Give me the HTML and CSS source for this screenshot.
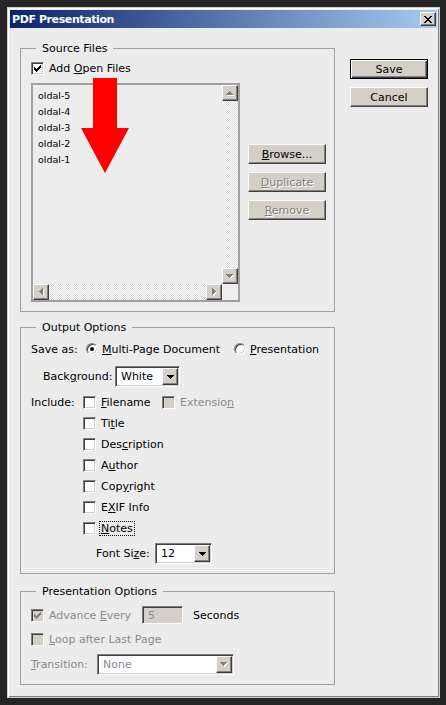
FILE: index.html
```html
<!DOCTYPE html>
<html lang="en">
<head>
<meta charset="utf-8">
<title>PDF Presentation</title>
<link rel="stylesheet" href="styles.css">
</head>
<body>
<div class="window">
  <div class="titlebar">
    <span class="title">PDF Presentation</span>
    <span class="close" aria-label="Close">
      <svg width="8" height="7" viewBox="0 0 8 7" shape-rendering="crispEdges"><path fill="#000" d="M0 0h2v1h-2zM6 0h2v1h-2zM1 1h2v1h-2zM5 1h2v1h-2zM2 2h4v1h-4zM3 3h2v1h-2zM2 4h4v1h-4zM1 5h2v1h-2zM5 5h2v1h-2zM0 6h2v1h-2zM6 6h2v1h-2z"/></svg>
    </span>
  </div>

  <div class="client">
    <div class="main">
      <!-- Source files -->
      <fieldset class="group source">
        <legend>Source Files</legend>
        <div class="row add-open">
          <span class="cb"><svg class="tick" width="7" height="7" viewBox="0 0 7 7" shape-rendering="crispEdges"><path d="M6 0h1v1h-1zM5 1h2v1h-2zM0 2h1v1h-1zM4 2h3v1h-3zM0 3h2v1h-2zM3 3h3v1h-3zM0 4h5v1h-5zM1 5h3v1h-3zM2 6h1v1h-1z"/></svg></span>
          <span>Add <u>O</u>pen Files</span>
        </div>
        <div class="source-body">
          <div class="listbox">
            <ul class="items">
              <li>oldal-5</li>
              <li>oldal-4</li>
              <li>oldal-3</li>
              <li>oldal-2</li>
              <li>oldal-1</li>
            </ul>
            <div class="vscroll">
              <span class="sbtn"><svg width="8" height="5" viewBox="0 0 8 5" shape-rendering="crispEdges"><path fill="#fff" transform="translate(1 1)" d="M3 0h1v1h-1zM2 1h3v1h-3zM1 2h5v1h-5zM0 3h7v1h-7z"/><path fill="#808080" d="M3 0h1v1h-1zM2 1h3v1h-3zM1 2h5v1h-5zM0 3h7v1h-7z"/></svg></span>
              <span class="track"></span>
              <span class="sbtn"><svg width="8" height="5" viewBox="0 0 8 5" shape-rendering="crispEdges"><path fill="#fff" transform="translate(1 1)" d="M0 0h7v1h-7zM1 1h5v1h-5zM2 2h3v1h-3zM3 3h1v1h-1z"/><path fill="#808080" d="M0 0h7v1h-7zM1 1h5v1h-5zM2 2h3v1h-3zM3 3h1v1h-1z"/></svg></span>
            </div>
            <div class="hscroll">
              <span class="sbtn"><svg width="5" height="8" viewBox="0 0 5 8" shape-rendering="crispEdges"><path fill="#fff" transform="translate(1 1)" d="M3 0h1v7h-1zM2 1h1v5h-1zM1 2h1v3h-1zM0 3h1v1h-1z"/><path fill="#808080" d="M3 0h1v7h-1zM2 1h1v5h-1zM1 2h1v3h-1zM0 3h1v1h-1z"/></svg></span>
              <span class="track"></span>
              <span class="sbtn"><svg width="5" height="8" viewBox="0 0 5 8" shape-rendering="crispEdges"><path fill="#fff" transform="translate(1 1)" d="M0 0h1v7h-1zM1 1h1v5h-1zM2 2h1v3h-1zM3 3h1v1h-1z"/><path fill="#808080" d="M0 0h1v7h-1zM1 1h1v5h-1zM2 2h1v3h-1zM3 3h1v1h-1z"/></svg></span>
            </div>
            <span class="corner"></span>
            <svg class="pointer" width="48" height="95" viewBox="0 0 48 95"><polygon fill="#ff0000" points="12,0 36,0 36,50 48,50 24,95 0,50 12,50"/></svg>
          </div>
          <div class="side-buttons">
            <button class="btn" type="button"><u>B</u>rowse...</button>
            <button class="btn" type="button" disabled><u>D</u>uplicate</button>
            <button class="btn" type="button" disabled><u>R</u>emove</button>
          </div>
        </div>
      </fieldset>

      <!-- Output options -->
      <fieldset class="group output">
        <legend>Output Options</legend>
        <div class="row save-as">
          <span class="lbl-save">Save as:</span>
          <span class="opt opt-first"><span class="radio on"><span class="dot"></span></span><span><u>M</u>ulti-Page Document</span></span>
          <span class="opt"><span class="radio"></span><span><u>P</u>resentation</span></span>
        </div>
        <div class="row bg-row">
          <span class="lbl-bg">Back<u>g</u>round:</span>
          <span class="select sel-bg"><span class="val">White</span><span class="drop"><svg width="7" height="4" viewBox="0 0 7 4" shape-rendering="crispEdges"><path d="M0 0h7v1h-7zM1 1h5v1h-5zM2 2h3v1h-3zM3 3h1v1h-1z"/></svg></span></span>
        </div>
        <div class="include">
          <span class="lbl-inc">Include:</span>
          <div class="inc-list">
            <div class="cbrow">
              <span class="cbitem first"><span class="cb"></span><span><u>F</u>ilename</span></span>
              <span class="cbitem off"><span class="cb dis"></span><span>Extensio<u>n</u></span></span>
            </div>
            <div class="cbrow"><span class="cbitem"><span class="cb"></span><span>Ti<u>t</u>le</span></span></div>
            <div class="cbrow"><span class="cbitem"><span class="cb"></span><span>Des<u>c</u>ription</span></span></div>
            <div class="cbrow"><span class="cbitem"><span class="cb"></span><span>A<u>u</u>thor</span></span></div>
            <div class="cbrow"><span class="cbitem"><span class="cb"></span><span>Cop<u>y</u>right</span></span></div>
            <div class="cbrow"><span class="cbitem"><span class="cb"></span><span>E<u>X</u>IF Info</span></span></div>
            <div class="cbrow"><span class="cbitem"><span class="cb"></span><span class="focus"><u>N</u>otes</span></span></div>
          </div>
        </div>
        <div class="row fs-row">
          <span class="lbl-fs">Font Si<u>z</u>e:</span>
          <span class="select sel-fs"><span class="val">12</span><span class="drop"><svg width="7" height="4" viewBox="0 0 7 4" shape-rendering="crispEdges"><path d="M0 0h7v1h-7zM1 1h5v1h-5zM2 2h3v1h-3zM3 3h1v1h-1z"/></svg></span></span>
        </div>
      </fieldset>

      <!-- Presentation options -->
      <fieldset class="group present">
        <legend>Presentation Options</legend>
        <div class="row adv-row">
          <span class="cbitem off adv"><span class="cb dis"><svg class="tick" width="7" height="7" viewBox="0 0 7 7" shape-rendering="crispEdges"><path d="M6 0h1v1h-1zM5 1h2v1h-2zM0 2h1v1h-1zM4 2h3v1h-3zM0 3h2v1h-2zM3 3h3v1h-3zM0 4h5v1h-5zM1 5h3v1h-3zM2 6h1v1h-1z"/></svg></span><span>Advance <u>E</u>very</span></span>
          <span class="field dis">5</span>
          <span class="secs">Seconds</span>
        </div>
        <div class="row loop-row">
          <span class="cbitem off"><span class="cb dis"></span><span><u>L</u>oop after Last Page</span></span>
        </div>
        <div class="row trans-row">
          <span class="lbl-tr off"><u>T</u>ransition:</span>
          <span class="select sel-tr dis"><span class="val">None</span><span class="drop"><svg width="8" height="5" viewBox="0 0 8 5" shape-rendering="crispEdges"><path fill="#fff" transform="translate(1 1)" d="M0 0h7v1h-7zM1 1h5v1h-5zM2 2h3v1h-3zM3 3h1v1h-1z"/><path fill="#808080" d="M0 0h7v1h-7zM1 1h5v1h-5zM2 2h3v1h-3zM3 3h1v1h-1z"/></svg></span></span>
        </div>
      </fieldset>
    </div>

    <div class="actions">
      <button class="btn default" type="button">Save</button>
      <button class="btn" type="button">Cancel</button>
    </div>
  </div>
</div>
</body>
</html>
```
FILE: styles.css
```css
* { box-sizing: border-box; }

html, body { margin: 0; }

body {
  background: #252525;
  padding: 7px;
  font: 11px/13px "DejaVu Sans", Tahoma, sans-serif;
  color: #000;
}

u { text-decoration: underline; text-underline-offset: 1px; }

/* ---------- window frame ---------- */
.window {
  width: 433px;
  height: 691px;
  background: #ececec;
  border: 1px solid #d4d0c8;
  box-shadow: inset 1px 1px 0 #fff, inset -1px -1px 0 #808080;
  padding: 2px;
  display: flex;
  flex-direction: column;
}

.titlebar {
  height: 18px;
  flex: none;
  display: flex;
  align-items: center;
  padding: 0 1px 0 2px;
  background: linear-gradient(to right, #0a246a, #a6caf0);
}

.title {
  flex: 1;
  color: #fff;
  font-weight: bold;
  letter-spacing: -0.4px;
}

.close {
  width: 16px;
  height: 14px;
  display: grid;
  place-items: center;
  background: #d4d0c8;
  border: 1px solid;
  border-color: #fff #404040 #404040 #fff;
  box-shadow: inset -1px -1px 0 #808080;
  padding-top: 1px;
}

.client {
  flex: 1;
  display: flex;
  gap: 15px;
  padding: 13px 8px 0 10px;
}

.main {
  width: 315px;
  display: flex;
  flex-direction: column;
}

/* ---------- group boxes ---------- */
.group {
  margin: 0;
  padding: 0 0 9px 10px;
  border: 1px solid #a0a0a0;
  min-width: 0;
}

.group legend {
  margin-left: 5px;
  padding: 0 6px;
  height: 15px;
  line-height: 15px;
}

.group + .group { margin-top: 8px; }
.group.present { margin-top: 10px; }

.row {
  display: flex;
  align-items: center;
}

/* ---------- check boxes and radios ---------- */
.cb {
  width: 13px;
  height: 13px;
  flex: none;
  display: grid;
  place-items: center;
  background: #fff;
  border: 1px solid;
  border-color: #808080 #fff #fff #808080;
  box-shadow: inset 1px 1px 0 #404040, inset -1px -1px 0 #d4d0c8;
}

.cb.dis { background: #d4d0c8; }
.cb .tick path { fill: #000; }
.cb.dis .tick path { fill: #808080; }

.radio {
  width: 12px;
  height: 12px;
  flex: none;
  border-radius: 50%;
  display: grid;
  place-items: center;
  background: #fff;
  border: 1px solid;
  border-color: #808080 #fff #fff #808080;
  box-shadow: inset 1px 1px 0 #404040, inset -1px -1px 0 #d4d0c8;
}

.radio .dot {
  width: 4px;
  height: 4px;
  border-radius: 50%;
  background: #000;
}

.cbitem {
  display: flex;
  align-items: center;
  gap: 5px;
}

.off { color: #8a8a8a; }

.focus {
  outline: 1px dotted #000;
  outline-offset: 0;
  padding: 0 1px;
  margin-left: -1px;
}

/* ---------- buttons ---------- */
.btn {
  width: 78px;
  height: 20px;
  padding: 0;
  font: inherit;
  color: #000;
  background: #d4d0c8;
  border: 1px solid;
  border-color: #fff #404040 #404040 #fff;
  box-shadow: inset -1px -1px 0 #808080;
  border-radius: 0;
}

.btn:disabled {
  color: #808080;
  text-shadow: 1px 1px 0 #fff;
}

.btn.default {
  border-color: #000;
  box-shadow: inset 1px 1px 0 #fff, inset -1px -1px 0 #404040, inset -2px -2px 0 #808080;
}

.actions {
  margin-top: 18px;
  width: 78px;
  display: flex;
  flex-direction: column;
  gap: 8px;
}

/* ---------- source files ---------- */
.add-open {
  margin-top: 6px;
  height: 13px;
  gap: 5px;
}

.source-body {
  display: flex;
  gap: 8px;
  margin-top: 8px;
}

.listbox {
  position: relative;
  width: 209px;
  height: 219px;
  border: 2px solid #a0a0a0;
  background: #ededed;
  display: grid;
  grid-template-columns: 1fr 16px;
  grid-template-rows: 1fr 16px;
}

.items {
  margin: 0;
  padding: 3px 5px;
  list-style: none;
  font-size: 9.5px;
  line-height: 16px;
}

.vscroll, .hscroll { display: flex; }
.vscroll { flex-direction: column; }

.track {
  flex: 1;
  background-color: #fff;
  background-image: conic-gradient(#dcdcdc 25%, #fff 0 50%, #dcdcdc 0 75%, #fff 0);
  background-size: 2px 2px;
}

.sbtn {
  width: 16px;
  height: 16px;
  flex: none;
  display: grid;
  place-items: center;
  background: #d4d0c8;
  border: 1px solid;
  border-color: #fff #404040 #404040 #fff;
  box-shadow: inset -1px -1px 0 #808080;
}

.corner { background: #eeeeee; }

.pointer {
  position: absolute;
  left: 48px;
  top: -7px;
}

.side-buttons {
  margin-top: 61px;
  display: flex;
  flex-direction: column;
  gap: 8px;
}

/* ---------- output options ---------- */
.save-as {
  margin-top: 6px;
  height: 16px;
}

.lbl-save { width: 55px; }

.opt {
  display: flex;
  align-items: center;
  gap: 4px;
}

.opt-first { width: 148px; }

.select {
  height: 21px;
  display: flex;
  align-items: center;
  padding: 1px;
  background: #fff;
  border: 1px solid;
  border-color: #808080 #fff #fff #808080;
  box-shadow: inset 1px 1px 0 #404040, inset -1px -1px 0 #d4d0c8;
}

.select .val {
  flex: 1;
  padding-left: 4px;
}

.select .drop {
  width: 16px;
  height: 17px;
  display: grid;
  place-items: center;
  background: #d4d0c8;
  border: 1px solid;
  border-color: #fff #404040 #404040 #fff;
  box-shadow: inset -1px -1px 0 #808080;
}

.select.dis .val { color: #8a8a9a; }

.bg-row {
  margin-top: 9px;
  height: 21px;
  padding-left: 12px;
}

.lbl-bg { width: 72px; }
.sel-bg { width: 65px; }

.include {
  margin-top: 5px;
  display: flex;
}

.lbl-inc {
  width: 52px;
  line-height: 21px;
}

.cbrow {
  height: 21px;
  display: flex;
  align-items: center;
}

.cbitem.first { width: 79px; }

.fs-row {
  margin-top: 4px;
  height: 21px;
  padding-left: 65px;
}

.lbl-fs { width: 59px; }
.sel-fs { width: 57px; }

/* ---------- presentation options ---------- */
.adv-row {
  margin-top: 7px;
  height: 18px;
}

.adv { width: 111px; }

.field {
  width: 41px;
  height: 18px;
  padding: 1px 0 0 5px;
  line-height: 15px;
  border: 1px solid;
  border-color: #808080 #fff #fff #808080;
  box-shadow: inset 1px 1px 0 #404040, inset -1px -1px 0 #d4d0c8;
}

.field.dis {
  background: #d4d0c8;
  color: #8a8a8a;
}

.secs { margin-left: 10px; }

.loop-row {
  margin-top: 7px;
  height: 16px;
}

.trans-row {
  margin-top: 7px;
  height: 21px;
}

.lbl-tr { width: 66px; }
.sel-tr { width: 137px; }
```
